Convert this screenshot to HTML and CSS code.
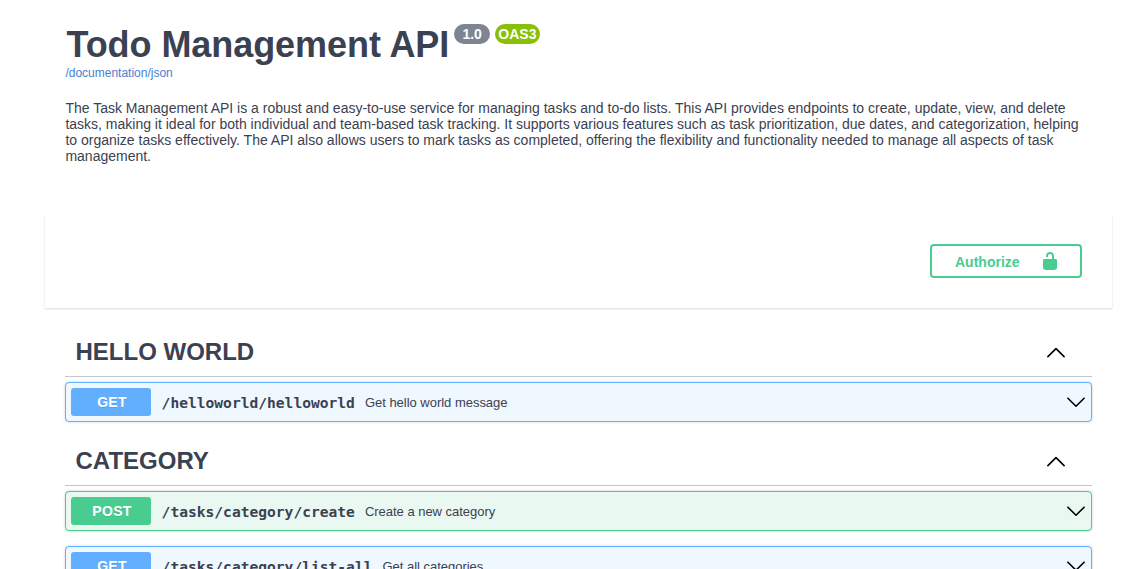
FILE: index.html
```html
<!DOCTYPE html>
<html lang="en">
<head>
<meta charset="utf-8">
<title>Todo Management API</title>
<link rel="stylesheet" href="styles.css">
</head>
<body>
<header class="info">
  <div class="title-row">
    <h1 class="title">Todo Management API</h1>
    <span class="badge">1.0</span>
    <span class="badge badge-oas">OAS3</span>
  </div>
  <a class="spec-link">/documentation/json</a>
  <p class="description">The Task Management API is a robust and easy-to-use service for managing tasks and to-do lists. This API provides endpoints to create, update, view, and delete<br>tasks, making it ideal for both individual and team-based task tracking. It supports various features such as task prioritization, due dates, and categorization, helping<br>to organize tasks effectively. The API also allows users to mark tasks as completed, offering the flexibility and functionality needed to manage all aspects of task<br>management.</p>
</header>
<section class="schemes">
  <button class="authorize"><span>Authorize</span>
    <svg width="20" height="20" viewBox="0 0 20 20"><path d="M15.8 8H14V5.6C14 2.703 12.665 1 10 1 7.334 1 6 2.703 6 5.6V6h2v-.801C8 3.754 8.797 3 10 3c1.203 0 2 .754 2 2.199V8H4c-.553 0-1 .646-1 1.199V17c0 .549.428 1.139.951 1.307l1.197.387C5.672 18.861 6.55 19 7.1 19h5.8c.549 0 1.428-.139 1.951-.307l1.196-.387c.524-.167.953-.757.953-1.306V9.199C17 8.646 16.352 8 15.8 8z"/></svg>
  </button>
</section>
<main class="operations">
  <section>
    <h3 class="tag"><span>HELLO WORLD</span><svg class="arrow" width="20" height="20" viewBox="0 0 20 20"><path d="M1.9 14.6 10 6.6l8.1 8"/></svg></h3>
    <div class="op get"><span class="method">GET</span><span class="path">/helloworld/helloworld</span><span class="summary">Get hello world message</span><svg class="arrow" width="20" height="20" viewBox="0 0 20 20"><path d="M1.9 6.2 10 14.2l8.1-8"/></svg></div>
  </section>
  <section>
    <h3 class="tag"><span>CATEGORY</span><svg class="arrow" width="20" height="20" viewBox="0 0 20 20"><path d="M1.9 14.6 10 6.6l8.1 8"/></svg></h3>
    <div class="op post"><span class="method">POST</span><span class="path">/tasks/category/create</span><span class="summary">Create a new category</span><svg class="arrow" width="20" height="20" viewBox="0 0 20 20"><path d="M1.9 6.2 10 14.2l8.1-8"/></svg></div>
    <div class="op get"><span class="method">GET</span><span class="path">/tasks/category/list-all</span><span class="summary">Get all categories</span><svg class="arrow" width="20" height="20" viewBox="0 0 20 20"><path d="M1.9 6.2 10 14.2l8.1-8"/></svg></div>
  </section>
</main>
</body>
</html>
```
FILE: styles.css
```css
* { box-sizing: border-box; }
html { height: 100%; overflow: hidden; }
body {
  margin: 0;
  height: 569px;
  overflow: hidden;
  background: #fff;
  color: #3b4151;
  font-family: "Liberation Sans", Arial, sans-serif;
}
.info { height: 214px; padding: 23px 42px 0 65.4px; }
.title-row { display: flex; align-items: flex-start; height: 42px; }
.title { width: 384px; margin: 0 4px 0 1px; font-size: 36px; line-height: 44px; letter-spacing: -.06px; white-space: nowrap; }
.badge {
  height: 20px;
  margin: 1px 5px 0 0;
  padding: 0 8px;
  border-radius: 20px;
  background: #7d8492;
  color: #fff;
  font-size: 14px;
  font-weight: 700;
  line-height: 21px;
}
.badge-oas { padding: 0 3.5px; background: #89bf04; }
.spec-link { display: block; height: 14px; font-size: 12px; line-height: 17px; color: #4780cf; }
.description { margin: 21px 0 0; font-size: 14px; line-height: 16px; white-space: nowrap; }
.schemes {
  display: flex;
  justify-content: flex-end;
  width: 1067px;
  margin: 0 0 20px 45px;
  padding: 30px;
  background: #fff;
  box-shadow: 0 1px 2px rgba(0, 0, 0, .15);
}
.authorize {
  display: flex;
  align-items: center;
  justify-content: space-between;
  width: 152px;
  height: 34px;
  padding: 0 20px 0 23px;
  border: 2px solid #49cc90;
  border-radius: 4px;
  background: transparent;
  color: #49cc90;
  font: 700 14px/16px "Liberation Sans", Arial, sans-serif;
}
.authorize span { padding-top: 2px; }
.authorize svg { fill: #49cc90; }
.operations { width: 1027px; margin-left: 65px; }
.tag {
  display: flex;
  align-items: center;
  justify-content: space-between;
  height: 49px;
  margin: 0 0 5px;
  padding: 0 26px 0 10.5px;
  border-bottom: 1px solid rgba(59, 65, 81, .3);
  font-size: 24px;
}
.arrow { fill: none; stroke: #000; stroke-width: 1.6; stroke-linecap: round; stroke-linejoin: round; }
.op {
  display: flex;
  align-items: center;
  height: 40px;
  margin-bottom: 15px;
  padding: 5px;
  border: 1px solid;
  border-radius: 4px;
  box-shadow: 0 0 3px rgba(0, 0, 0, .19);
}
.get { border-color: #61affe; background: #eff7ff; }
.post { border-color: #49cc90; background: #e9f9f1; }
.method {
  width: 80px;
  height: 28px;
  padding-left: 2px;
  border-radius: 3px;
  color: #fff;
  font-size: 14px;
  font-weight: 700;
  line-height: 28px;
  letter-spacing: .3px;
  text-align: center;
  text-shadow: 0 1px 0 rgba(0, 0, 0, .1);
}
.get .method { background: #61affe; }
.post .method { background: #49cc90; }
.path { padding: 2px 10px 0 10.6px; font: 700 14.6px/18px "DejaVu Sans Mono", monospace; }
.summary { font-size: 13px; letter-spacing: -.02px; }
.op .arrow { margin-left: auto; }
```
